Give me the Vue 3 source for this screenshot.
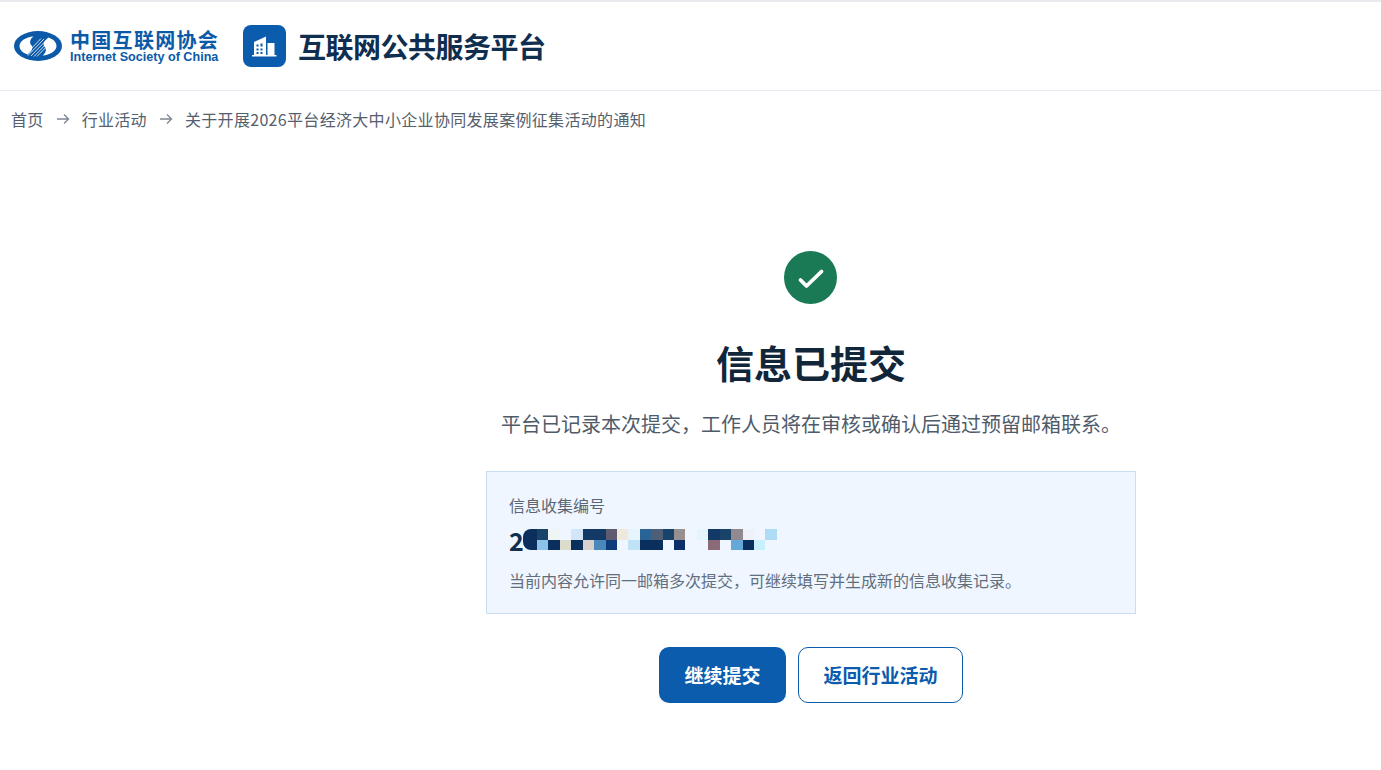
<script setup>
const bg = '#eff6ff'
const row1 = ['#1a4369', '#eef5f4', bg, '#d2e6f8', '#133a66', '#133a66', '#5f5a70', '#efe8dc', '#e6f4fc', '#2a6496', '#4f5f78', '#1a4369', '#989090', bg, '#e6f4fc', '#133a66', '#1a4369', '#908a90', '#eef2f8', bg, '#aedcf5']
const row2 = ['#8cc2ea', '#0a2f5c', '#dcdccc', '#0a2f5c', '#d8d0cc', '#4a88bc', '#0c3a7a', bg, '#c0e2f4', '#0a2f5c', '#0a2f5c', bg, '#0a2f6a', bg, bg, '#8c6a78', bg, '#66a8d8', '#0a2f5c', '#c8f0fc', bg]
</script>

<template>
  <div class="page">
    <header class="header">
      <div class="isc">
        <svg class="isc-mark" viewBox="0 0 48 30" width="48" height="30">
          <ellipse cx="24" cy="15" rx="24" ry="15" fill="#0b5aa8" />
          <path d="M5.500 15C5.500 10 12 6 19.500 5.500C15 9 15.500 12.500 18 15C19.500 18.500 16 21.500 13.500 23.500C9 22 5.500 19 5.500 15Z" fill="#fff" />
          <path d="M42.500 15C42.500 20 36 24 28.500 24.500C33 21 32.500 17.500 30 15C28.500 11.500 32 8.500 34.500 6.500C39 8 42.500 11 42.500 15Z" fill="#fff" />
          <path d="M14 24.500L30 8M17 25L33 8.500M20 25.500L35 10M23 25.500L37 11M12 23L27 7.500" stroke="#fff" stroke-width="0.800" fill="none" />
        </svg>
        <div class="isc-text">
          <div class="isc-cn">中国互联网协会</div>
          <div class="isc-en">Internet Society of China</div>
        </div>
      </div>
      <div class="brand">
        <span class="brand-icon">
          <svg viewBox="0 0 25 21" width="25" height="21" fill="#fff">
            <path d="M2 19V6L14 0.500V19Z" />
            <path d="M15.500 7H22.500V19H15.500Z" />
            <path d="M0 19H24.500V20.500H0Z" />
            <path d="M4.500 8.500H6.500V10.500H4.500ZM8.500 7.500H10.500V10.500H8.500ZM4.500 12.500H6.500V14.500H4.500ZM8.500 12.500H10.500V14.500H8.500ZM4.500 16H6.500V18H4.500ZM8.500 16H10.500V18H8.500Z" fill="#0b5cad" />
          </svg>
        </span>
        <span class="brand-name">互联网公共服务平台</span>
      </div>
    </header>

    <nav class="crumbs">
      <span>首页</span>
      <svg class="arrow" viewBox="0 0 14 14" width="14" height="14"><path d="M1 7H12.500M8 2.500L12.500 7L8 11.500" /></svg>
      <span>行业活动</span>
      <svg class="arrow" viewBox="0 0 14 14" width="14" height="14"><path d="M1 7H12.500M8 2.500L12.500 7L8 11.500" /></svg>
      <span>关于开展2026平台经济大中小企业协同发展案例征集活动的通知</span>
    </nav>

    <main class="result">
      <div class="ok">
        <svg viewBox="0 0 32 32" width="32" height="32"><path d="M5.500 18L11.500 24L26.500 9.500" /></svg>
      </div>
      <h1>信息已提交</h1>
      <p class="lead">平台已记录本次提交，工作人员将在审核或确认后通过预留邮箱联系。</p>
      <section class="card">
        <div class="label">信息收集编号</div>
        <div class="code">
          <span class="digit">2</span>
          <span class="blob"></span>
          <span class="mosaic">
            <span class="mrow"><i v-for="(c, i) in row1" :key="i" :style="{ background: c }"></i></span>
            <span class="mrow"><i v-for="(c, i) in row2" :key="i" :style="{ background: c }"></i></span>
          </span>
        </div>
        <div class="note">当前内容允许同一邮箱多次提交，可继续填写并生成新的信息收集记录。</div>
      </section>
      <div class="actions">
        <button class="btn primary">继续提交</button>
        <button class="btn ghost">返回行业活动</button>
      </div>
    </main>
  </div>
</template>

<style>
html, body { margin: 0; background: #fff; }
</style>

<style scoped>
.page {
  min-height: 770px;
  background: #fff;
  border-top: 2px solid #e8eaed;
  box-sizing: border-box;
  font-family: "Noto Sans CJK SC", "Liberation Sans", sans-serif;
  color: #10263f;
}
.header {
  height: 89px;
  box-sizing: border-box;
  border-bottom: 1px solid #e4e9f2;
  display: flex;
  align-items: center;
  padding-left: 14px;
}
.isc { display: flex; align-items: center; gap: 8px; width: 229px; }
.isc-mark { flex: none; }
.isc-text { padding-top: 2px; }
.isc-cn { font-size: 20px; font-weight: 700; line-height: 20px; letter-spacing: 1.300px; color: #0b5aa8; white-space: nowrap; }
.isc-en { font-family: "Liberation Sans", sans-serif; font-size: 12.600px; font-weight: 700; line-height: 14px; color: #0b5aa8; white-space: nowrap; }
.brand { display: flex; align-items: center; gap: 12px; }
.brand-icon {
  width: 43px; height: 42px; border-radius: 8px; background: #0b5cad;
  display: flex; align-items: center; justify-content: center;
}
.brand-name { font-size: 28px; font-weight: 700; line-height: 40px; color: #0f2e50; letter-spacing: -0.500px; }
.crumbs {
  display: flex; align-items: center; gap: 12px;
  padding: 16px 0 0 11px;
  font-size: 16px; line-height: 24px; color: #55606e;
  letter-spacing: 0.020em;
}
.arrow { fill: none; stroke: #7c8794; stroke-width: 1.300; }
.result {
  margin-left: 241px;
  display: flex; flex-direction: column; align-items: center;
  padding-top: 120px;
}
.ok {
  width: 53px; height: 53px; border-radius: 50%; background: #1a7a55;
  margin-right: 1px;
  display: flex; align-items: center; justify-content: center;
}
.ok svg { fill: none; stroke: #fff; stroke-width: 3.800; stroke-linecap: round; stroke-linejoin: round; }
h1 { margin: 33px 0 0; font-size: 38px; line-height: 50px; font-weight: 700; color: #12263a; }
.lead { margin: 22px 0 0; font-size: 20px; line-height: 30px; color: #4f5b69; }
.card {
  width: 650px; height: 143px; box-sizing: border-box; margin-top: 32px;
  background: #eff6ff; border: 1px solid #c9dcf0;
  padding: 22px 22px 0;
}
.label { font-size: 16px; line-height: 22px; color: #5a6675; }
.code { display: flex; align-items: center; height: 30px; margin-top: 11px; }
.digit { font-size: 25px; font-weight: 700; color: #0f2e50; line-height: 30px; width: 14px; margin-bottom: 4px; }
.blob { width: 14px; height: 21px; margin-bottom: 5px; background: #0a2f5c; border-radius: 8px 0 0 8px; }
.mosaic { display: flex; flex-direction: column; margin-bottom: 5px; }
.mrow { display: flex; height: 10.500px; }
.mrow i { display: block; width: 11.430px; height: 100%; }
.note { margin-top: 12px; font-size: 16px; line-height: 22px; color: #636e7c; }
.actions { display: flex; gap: 12px; margin-top: 33px; }
.btn {
  height: 56px; border-radius: 10px; box-sizing: border-box;
  font-family: inherit; font-size: 19px; font-weight: 700; padding: 0 0 2px;
}
.primary { width: 127px; background: #0b5cad; border: none; color: #fff; }
.ghost { width: 165px; background: #fff; border: 1px solid #0b5cad; color: #0b5cad; }
</style>
